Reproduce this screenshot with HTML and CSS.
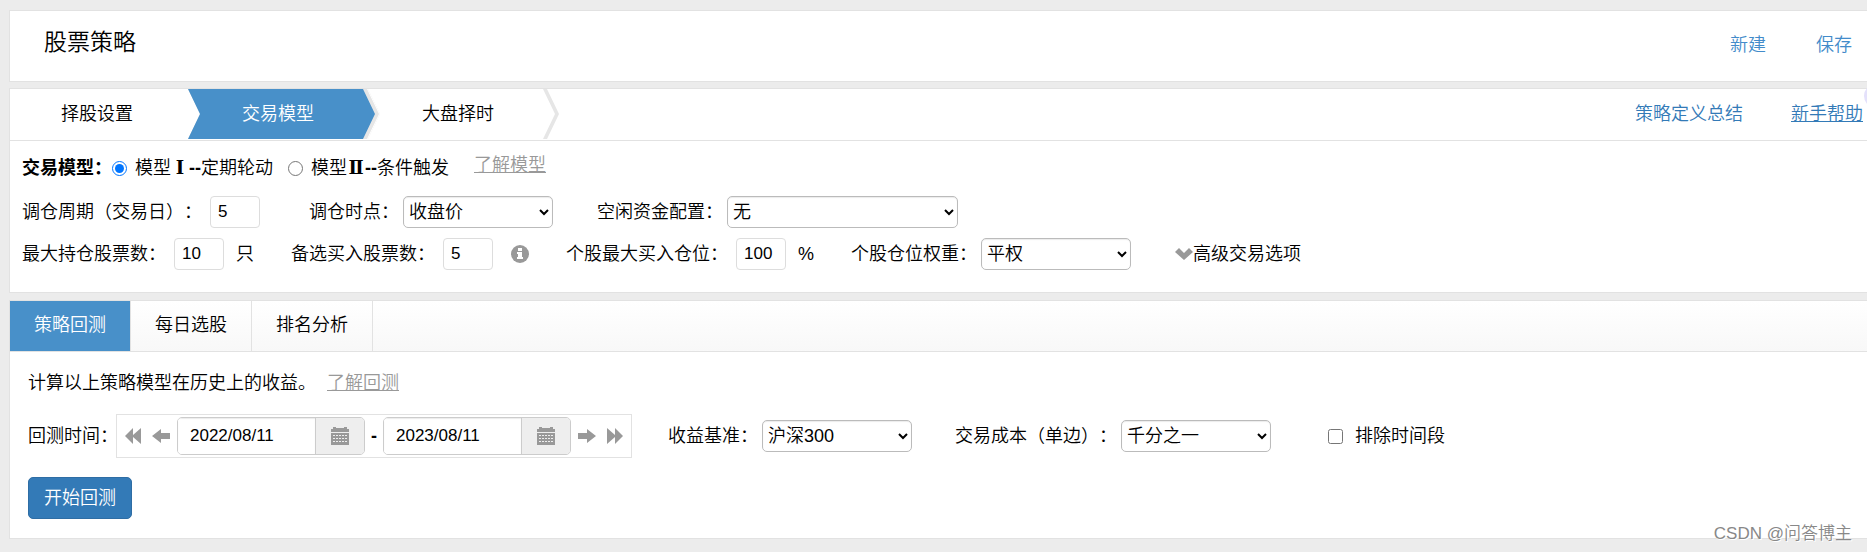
FILE: index.html
```html
<!DOCTYPE html>
<html lang="zh-CN">
<head>
    <meta charset="UTF-8">
    <meta name="viewport" content="width=device-width, initial-scale=1.0">
    <title>股票策略</title>
    <link rel="stylesheet" href="styles.css">
</head>
<body>
    <header class="panel header">
        <h1>股票策略</h1>
        <nav class="header-links">
            <a href="#">新建</a>
            <a href="#">保存</a>
        </nav>
    </header>

    <section class="panel">
        <div class="steps-bar">
            <ul class="steps">
                <li class="step first"><a href="#">择股设置</a></li>
                <li class="step active"><a href="#">交易模型</a></li>
                <li class="step"><a href="#">大盘择时</a></li>
            </ul>
            <nav class="help-links">
                <a href="#">策略定义总结</a>
                <a href="#" class="underline">新手帮助</a>
            </nav>
            <span class="bubble"></span>
        </div>
        <form class="settings">
            <div class="row row-model">
                <strong>交易模型：</strong>
                <input type="radio" name="model" id="model1" checked>
                <label for="model1">模型<b class="roman">Ⅰ</b><b>--</b>定期轮动</label>
                <input type="radio" name="model" id="model2">
                <label for="model2">模型<b class="roman">Ⅱ</b><b>--</b>条件触发</label>
                <a href="#" class="more">了解模型</a>
            </div>
            <div class="row">
                <div class="field">
                    <label for="period">调仓周期（交易日）：</label>
                    <input type="text" class="number" id="period" value="5">
                </div>
                <div class="field">
                    <label for="moment">调仓时点：</label>
                    <select id="moment" class="select"><option>收盘价</option></select>
                </div>
                <div class="field">
                    <label for="idle">空闲资金配置：</label>
                    <select id="idle" class="select wide"><option>无</option></select>
                </div>
            </div>
            <div class="row">
                <div class="field">
                    <label for="maxhold">最大持仓股票数：</label>
                    <input type="text" class="number" id="maxhold" value="10">
                    <span>只</span>
                </div>
                <div class="field">
                    <label for="backup">备选买入股票数：</label>
                    <input type="text" class="number" id="backup" value="5">
                    <svg class="icon info" viewBox="0 0 18 18"><circle cx="9" cy="9" r="9"/><path fill="#fff" d="M7 3h4v3H7zM6 7h5v5h1v2H6v-2h1V9H6z"/></svg>
                </div>
                <div class="field">
                    <label for="maxbuy">个股最大买入仓位：</label>
                    <input type="text" class="number" id="maxbuy" value="100">
                    <span>%</span>
                </div>
                <div class="field">
                    <label for="weight">个股仓位权重：</label>
                    <select id="weight" class="select"><option>平权</option></select>
                </div>
                <a href="#" class="advanced"><svg class="icon" viewBox="0 0 18 18"><path d="M0 7l4-4 5 5 5-5 4 4-9 8z"/></svg>高级交易选项</a>
            </div>
        </form>
    </section>

    <section class="panel">
        <nav class="tabs">
            <a href="#" class="tab active">策略回测</a>
            <a href="#" class="tab">每日选股</a>
            <a href="#" class="tab">排名分析</a>
        </nav>
        <form class="backtest">
            <p>计算以上策略模型在历史上的收益。<a href="#" class="more">了解回测</a></p>
            <div class="row row-backtest">
                <div class="field">
                    <label for="start">回测时间：</label>
                    <div class="range">
                        <button type="button" class="nav" aria-label="后退一年"><svg class="icon" viewBox="0 0 18 18"><path d="M9 1v7l8-7v16l-8-7v7L1 9z"/></svg></button>
                        <button type="button" class="nav" aria-label="后退一月"><svg class="icon" viewBox="0 0 18 18"><path d="M0 9l9-7v4h9v6H9v4z"/></svg></button>
                        <div class="date">
                            <input type="text" id="start" value="2022/08/11">
                            <button type="button" aria-label="选择日期"><svg class="icon" viewBox="0 0 18 18"><path fill-rule="evenodd" d="M0 5V2h2V0h3v1h8V0h3v2h2v3zM0 6h18v12H0zM2 8v1h2V8zm3 0v1h2V8zm3 0v1h2V8zm3 0v1h2V8zm3 0v1h2V8zM2 11v1h2v-1zm3 0v1h2v-1zm3 0v1h2v-1zm3 0v1h2v-1zm3 0v1h2v-1zM2 14v1h2v-1zm3 0v1h2v-1zm3 0v1h2v-1zm3 0v1h2v-1zm3 0v1h2v-1z"/></svg></button>
                        </div>
                        <b class="dash">-</b>
                        <div class="date">
                            <input type="text" aria-label="结束日期" value="2023/08/11">
                            <button type="button" aria-label="选择日期"><svg class="icon" viewBox="0 0 18 18"><path fill-rule="evenodd" d="M0 5V2h2V0h3v1h8V0h3v2h2v3zM0 6h18v12H0zM2 8v1h2V8zm3 0v1h2V8zm3 0v1h2V8zm3 0v1h2V8zm3 0v1h2V8zM2 11v1h2v-1zm3 0v1h2v-1zm3 0v1h2v-1zm3 0v1h2v-1zm3 0v1h2v-1zM2 14v1h2v-1zm3 0v1h2v-1zm3 0v1h2v-1zm3 0v1h2v-1zm3 0v1h2v-1z"/></svg></button>
                        </div>
                        <button type="button" class="nav" aria-label="前进一月"><svg class="icon" viewBox="0 0 18 18"><path d="M18 9L9 2v4H0v6h9v4z"/></svg></button>
                        <button type="button" class="nav" aria-label="前进一年"><svg class="icon" viewBox="0 0 18 18"><path d="M9 1v7L1 1v16l8-7v7l8-8z"/></svg></button>
                    </div>
                </div>
                <div class="field">
                    <label for="benchmark">收益基准：</label>
                    <select id="benchmark" class="select"><option>沪深300</option></select>
                </div>
                <div class="field">
                    <label for="cost">交易成本（单边）：</label>
                    <select id="cost" class="select"><option>千分之一</option></select>
                </div>
                <div class="field exclude">
                    <input type="checkbox" id="exclude">
                    <label for="exclude">排除时间段</label>
                </div>
            </div>
            <button type="button" class="submit">开始回测</button>
        </form>
    </section>
    <div class="watermark">CSDN @问答博主</div>
</body>
</html>
```
FILE: styles.css
```css
* {
    box-sizing: border-box;
}
body {
    margin: 0;
    padding: 10px 0 6px 9px;
    background-color: #ececec;
    color: #000;
    font-family: "Liberation Sans", "Noto Sans CJK SC", sans-serif;
    font-size: 18px;
    font-weight: 350;
    line-height: 24px;
    text-spacing-trim: space-all;
    position: relative;
    overflow-x: hidden;
}
a {
    color: inherit;
    text-decoration: none;
}
input, select, button {
    font: inherit;
    color: inherit;
    margin: 0;
}
.panel {
    background-color: #fff;
    border: 1px solid #e2e2e2;
    border-right: none;
    margin-bottom: 7px;
}
.header {
    display: flex;
    justify-content: space-between;
    align-items: flex-start;
    height: 72px;
    margin-bottom: 6px;
    padding: 16px 15px 0 34px;
}
h1 {
    margin: 0;
    font-size: 23px;
    font-weight: inherit;
    line-height: 30px;
}
.header-links {
    display: flex;
    gap: 50px;
    padding-top: 6px;
    color: #428bca;
}
.steps-bar {
    display: flex;
    justify-content: space-between;
    align-items: center;
    border-bottom: 1px solid #e2e2e2;
    padding: 0 4px 1px 0;
    position: relative;
}
.steps {
    display: flex;
    list-style: none;
    margin: 0;
    padding: 0;
}
.step {
    width: 180px;
    height: 50px;
    line-height: 50px;
    text-align: center;
    position: relative;
}
.step.first {
    width: 178px;
    padding-right: 4px;
}
.step a {
    position: relative;
    z-index: 2;
}
.step::before, .step::after {
    content: "";
    position: absolute;
    top: 0;
    left: 0;
    height: 50px;
    clip-path: polygon(0 0, calc(100% - 12px) 0, 100% 50%, calc(100% - 12px) 100%, 0 100%, 12px 50%);
}
.step::before {
    width: 191px;
    background-color: #e6e6e6;
}
.step::after {
    width: 187px;
    background-color: #fff;
    z-index: 1;
}
.step.first::before, .step.first::after {
    display: none;
}
.step.active {
    color: #fff;
}
.step.active::after {
    background-color: #4890c9;
}
.help-links {
    display: flex;
    gap: 48px;
    color: #337ab7;
}
.underline {
    text-decoration: underline;
}
.bubble {
    position: absolute;
    top: -5px;
    right: -21px;
    width: 24px;
    height: 24px;
    border-radius: 50%;
    background-color: #e4e1fb;
}
.settings {
    padding: 11px 12px 12px;
}
.row {
    display: flex;
    align-items: center;
    height: 32px;
    margin-bottom: 10px;
    gap: 37px;
}
.row-model {
    gap: 0;
    margin-bottom: 12px;
}
.row-model input {
    width: 15px;
    height: 15px;
    margin-right: 8px;
}
.row-model label {
    margin-right: 15px;
}
.roman {
    display: inline-block;
    width: 18px;
    font-family: "DejaVu Serif", serif;
    line-height: 20px;
    text-align: center;
}
.more {
    color: #999;
    text-decoration: underline;
}
.row-model .more {
    margin: 0 0 7px 10px;
}
.field {
    display: flex;
    align-items: center;
}
.number {
    width: 50px;
    height: 32px;
    margin: 0 12px 0 8px;
    padding: 0 7px;
    border: 1px solid #ddd;
    border-radius: 4px;
    font-size: 17px;
}
.select {
    width: 150px;
    height: 32px;
    margin: 0 7px 0 4px;
    padding: 0 1px;
    border: 1px solid #bbb;
    border-radius: 5px;
    background-color: #fff;
    box-shadow: inset 0 1px 1px rgba(0, 0, 0, 0.08);
}
.select.wide {
    width: 231px;
}
.icon {
    display: block;
    width: 18px;
    height: 18px;
    fill: #999;
}
.info {
    margin-left: 6px;
}
.advanced {
    display: flex;
    align-items: center;
}
.tabs {
    display: flex;
    height: 51px;
    border-bottom: 1px solid #e2e2e2;
    background: linear-gradient(#fff, #f8f8f8);
}
.tab {
    width: 121px;
    line-height: 48px;
    text-align: center;
    border-right: 1px solid #e2e2e2;
}
.tab.active {
    background-color: #4890c9;
    color: #fff;
}
.backtest {
    padding: 19px 18px;
}
.backtest p {
    margin: 0 0 19px;
}
.backtest .more {
    margin-left: 11px;
}
.row-backtest {
    height: 44px;
    margin-bottom: 19px;
    gap: 36px;
}
.range {
    display: flex;
    align-items: center;
    gap: 4px;
    height: 44px;
    margin-left: -2px;
    padding: 0 4px;
    border: 1px solid #e2e2e2;
}
.nav {
    padding: 0 3px;
    border: none;
    background: none;
}
.dash {
    margin: 0 2px;
}
.date {
    display: flex;
    height: 38px;
    border: 1px solid #ccc;
    border-radius: 5px;
    overflow: hidden;
}
.date input {
    width: 137px;
    padding: 0 12px;
    border: none;
    font-size: 17px;
    box-shadow: inset 0 1px 1px rgba(0, 0, 0, 0.08);
}
.date button {
    width: 49px;
    padding: 0 15px;
    border: none;
    border-left: 1px solid #ccc;
    background-color: #eee;
}
.exclude {
    margin-left: 14px;
}
.exclude input {
    width: 15px;
    height: 15px;
    margin-right: 12px;
}
.submit {
    display: block;
    height: 42px;
    padding: 0 15px;
    border: 1px solid #2e6da4;
    border-radius: 5px;
    background-color: #337ab7;
    color: #fff;
}
.watermark {
    position: absolute;
    right: 15px;
    bottom: 6px;
    color: #888;
    font-size: 17px;
    text-shadow: 1px 1px 0 #fff;
}
```
